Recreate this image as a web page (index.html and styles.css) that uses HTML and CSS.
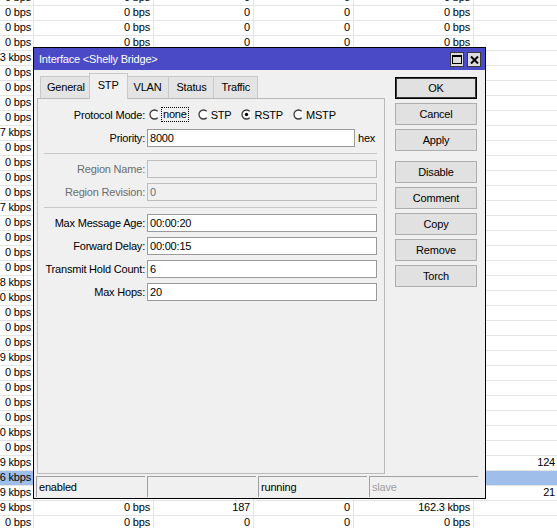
FILE: index.html
```html
<!DOCTYPE html>
<html>
<head>
<meta charset="utf-8">
<title>Interface &lt;Shelly Bridge&gt;</title>
<link rel="stylesheet" href="styles.css">
</head>
<body>
<div class="grid">
  <div class="row"><span class="c">0 bps</span><span class="c">0 bps</span><span class="c">0</span><span class="c">0</span><span class="c">0 bps</span><span class="c"></span></div>
  <div class="row"><span class="c">0 bps</span><span class="c">0 bps</span><span class="c">0</span><span class="c">0</span><span class="c">0 bps</span><span class="c"></span></div>
  <div class="row"><span class="c">0 bps</span><span class="c">0 bps</span><span class="c">0</span><span class="c">0</span><span class="c">0 bps</span><span class="c"></span></div>
  <div class="row"><span class="c">0 bps</span><span class="c">0 bps</span><span class="c">0</span><span class="c">0</span><span class="c">0 bps</span><span class="c"></span></div>
  <div class="row"><span class="c">3 kbps</span><span class="c"></span><span class="c"></span><span class="c"></span><span class="c"></span><span class="c"></span></div>
  <div class="row"><span class="c">0 bps</span><span class="c"></span><span class="c"></span><span class="c"></span><span class="c"></span><span class="c"></span></div>
  <div class="row"><span class="c">0 bps</span><span class="c"></span><span class="c"></span><span class="c"></span><span class="c"></span><span class="c"></span></div>
  <div class="row"><span class="c">0 bps</span><span class="c"></span><span class="c"></span><span class="c"></span><span class="c"></span><span class="c"></span></div>
  <div class="row"><span class="c">0 bps</span><span class="c"></span><span class="c"></span><span class="c"></span><span class="c"></span><span class="c"></span></div>
  <div class="row"><span class="c">7 kbps</span><span class="c"></span><span class="c"></span><span class="c"></span><span class="c"></span><span class="c"></span></div>
  <div class="row"><span class="c">0 bps</span><span class="c"></span><span class="c"></span><span class="c"></span><span class="c"></span><span class="c"></span></div>
  <div class="row"><span class="c">0 bps</span><span class="c"></span><span class="c"></span><span class="c"></span><span class="c"></span><span class="c"></span></div>
  <div class="row"><span class="c">0 bps</span><span class="c"></span><span class="c"></span><span class="c"></span><span class="c"></span><span class="c"></span></div>
  <div class="row"><span class="c">0 bps</span><span class="c"></span><span class="c"></span><span class="c"></span><span class="c"></span><span class="c"></span></div>
  <div class="row"><span class="c">7 kbps</span><span class="c"></span><span class="c"></span><span class="c"></span><span class="c"></span><span class="c"></span></div>
  <div class="row"><span class="c">0 bps</span><span class="c"></span><span class="c"></span><span class="c"></span><span class="c"></span><span class="c"></span></div>
  <div class="row"><span class="c">0 bps</span><span class="c"></span><span class="c"></span><span class="c"></span><span class="c"></span><span class="c"></span></div>
  <div class="row"><span class="c">0 bps</span><span class="c"></span><span class="c"></span><span class="c"></span><span class="c"></span><span class="c"></span></div>
  <div class="row"><span class="c">0 bps</span><span class="c"></span><span class="c"></span><span class="c"></span><span class="c"></span><span class="c"></span></div>
  <div class="row"><span class="c">8 kbps</span><span class="c"></span><span class="c"></span><span class="c"></span><span class="c"></span><span class="c"></span></div>
  <div class="row"><span class="c">0 kbps</span><span class="c"></span><span class="c"></span><span class="c"></span><span class="c"></span><span class="c"></span></div>
  <div class="row"><span class="c">0 bps</span><span class="c"></span><span class="c"></span><span class="c"></span><span class="c"></span><span class="c"></span></div>
  <div class="row"><span class="c">0 bps</span><span class="c"></span><span class="c"></span><span class="c"></span><span class="c"></span><span class="c"></span></div>
  <div class="row"><span class="c">0 bps</span><span class="c"></span><span class="c"></span><span class="c"></span><span class="c"></span><span class="c"></span></div>
  <div class="row"><span class="c">9 kbps</span><span class="c"></span><span class="c"></span><span class="c"></span><span class="c"></span><span class="c"></span></div>
  <div class="row"><span class="c">0 bps</span><span class="c"></span><span class="c"></span><span class="c"></span><span class="c"></span><span class="c"></span></div>
  <div class="row"><span class="c">0 bps</span><span class="c"></span><span class="c"></span><span class="c"></span><span class="c"></span><span class="c"></span></div>
  <div class="row"><span class="c">0 bps</span><span class="c"></span><span class="c"></span><span class="c"></span><span class="c"></span><span class="c"></span></div>
  <div class="row"><span class="c">0 bps</span><span class="c"></span><span class="c"></span><span class="c"></span><span class="c"></span><span class="c"></span></div>
  <div class="row"><span class="c">0 kbps</span><span class="c"></span><span class="c"></span><span class="c"></span><span class="c"></span><span class="c"></span></div>
  <div class="row"><span class="c">0 bps</span><span class="c"></span><span class="c"></span><span class="c"></span><span class="c"></span><span class="c"></span></div>
  <div class="row"><span class="c">9 kbps</span><span class="c"></span><span class="c"></span><span class="c"></span><span class="c"></span><span class="c">124</span></div>
  <div class="row sel"><span class="c">6 kbps</span><span class="c"></span><span class="c"></span><span class="c"></span><span class="c"></span><span class="c"></span></div>
  <div class="row"><span class="c">9 kbps</span><span class="c"></span><span class="c"></span><span class="c"></span><span class="c"></span><span class="c">21</span></div>
  <div class="row"><span class="c">9 kbps</span><span class="c">0 bps</span><span class="c">187</span><span class="c">0</span><span class="c">162.3 kbps</span><span class="c"></span></div>
  <div class="row"><span class="c">0 bps</span><span class="c">0 bps</span><span class="c">0</span><span class="c">0</span><span class="c">0 bps</span><span class="c"></span></div>
</div>

<div class="dialog">
  <div class="titlebar">
    <span class="title">Interface &lt;Shelly Bridge&gt;</span>
    <span class="tbtns">
      <span class="tbtn"><svg width="10" height="9" viewBox="0 0 10 9"><rect x="0.5" y="0.5" width="9" height="8" fill="none" stroke="#000" stroke-width="1"/><rect x="0" y="0" width="10" height="2" fill="#000"/></svg></span>
      <span class="tbtn"><svg width="9" height="8" viewBox="0 0 9 8"><path d="M1 0.5 L8 7.5 M8 0.5 L1 7.5" stroke="#000" stroke-width="2" fill="none"/></svg></span>
    </span>
  </div>
  <div class="main">
    <div class="tabctl">
      <div class="tabs">
        <span class="tab">General</span>
        <span class="tab active">STP</span>
        <span class="tab">VLAN</span>
        <span class="tab">Status</span>
        <span class="tab">Traffic</span>
      </div>
      <div class="panel">
        <div class="frow">
          <span class="lbl">Protocol Mode:</span>
          <span class="radios">
            <span class="opt"><svg class="radio" width="13" height="13" viewBox="0 0 13 13"><circle cx="5.5" cy="6.5" r="4.5" fill="#fff"/><path d="M8.68 3.32 A4.5 4.5 0 1 0 8.68 9.68" fill="none" stroke="#3c3c3c" stroke-width="1.3"/></svg><span class="focus">none</span></span>
            <span class="opt"><svg class="radio" width="13" height="13" viewBox="0 0 13 13"><circle cx="5.5" cy="6.5" r="4.5" fill="#fff"/><path d="M8.68 3.32 A4.5 4.5 0 1 0 8.68 9.68" fill="none" stroke="#3c3c3c" stroke-width="1.3"/></svg><span>STP</span></span>
            <span class="opt"><svg class="radio" width="13" height="13" viewBox="0 0 13 13"><circle cx="5.5" cy="6.5" r="4.5" fill="#fff"/><path d="M8.68 3.32 A4.5 4.5 0 1 0 8.68 9.68" fill="none" stroke="#3c3c3c" stroke-width="1.3"/><circle cx="5.5" cy="6.5" r="1.7" fill="#000"/></svg><span>RSTP</span></span>
            <span class="opt"><svg class="radio" width="13" height="13" viewBox="0 0 13 13"><circle cx="5.5" cy="6.5" r="4.5" fill="#fff"/><path d="M8.68 3.32 A4.5 4.5 0 1 0 8.68 9.68" fill="none" stroke="#3c3c3c" stroke-width="1.3"/></svg><span>MSTP</span></span>
          </span>
        </div>
        <div class="frow">
          <span class="lbl">Priority:</span>
          <span class="inp">8000</span>
          <span class="unit">hex</span>
        </div>
        <div class="sep"></div>
        <div class="frow">
          <span class="lbl dis">Region Name:</span>
          <span class="inp dis"></span>
        </div>
        <div class="frow">
          <span class="lbl dis">Region Revision:</span>
          <span class="inp dis">0</span>
        </div>
        <div class="sep"></div>
        <div class="frow">
          <span class="lbl">Max Message Age:</span>
          <span class="inp">00:00:20</span>
        </div>
        <div class="frow">
          <span class="lbl">Forward Delay:</span>
          <span class="inp">00:00:15</span>
        </div>
        <div class="frow">
          <span class="lbl">Transmit Hold Count:</span>
          <span class="inp">6</span>
        </div>
        <div class="frow">
          <span class="lbl">Max Hops:</span>
          <span class="inp">20</span>
        </div>
      </div>
    </div>
    <div class="buttons">
      <span class="btn default">OK</span>
      <span class="btn">Cancel</span>
      <span class="btn">Apply</span>
      <span class="btn gap">Disable</span>
      <span class="btn">Comment</span>
      <span class="btn">Copy</span>
      <span class="btn">Remove</span>
      <span class="btn">Torch</span>
    </div>
  </div>
  <div class="status">
    <span class="field">enabled</span>
    <span class="field"></span>
    <span class="field">running</span>
    <span class="field dim">slave</span>
  </div>
</div>
</body>
</html>
```

FILE: styles.css
```css
* { box-sizing: border-box; }
html, body { margin: 0; padding: 0; }
body {
  width: 557px;
  height: 528px;
  overflow: hidden;
  position: relative;
  background: #fff;
  font-family: "Liberation Sans", Arial, sans-serif;
  font-size: 11px;
  letter-spacing: -0.2px;
  color: #000;
}

/* background list */
.grid { margin-top: -9px; }
.row {
  display: grid;
  grid-template-columns: 34px 120px 100px 100px 120px 84px;
  height: 15px;
  border-bottom: 1px solid #e4e4e4;
}
.row.sel { background: #9fbfea; }
.c {
  display: flex;
  justify-content: flex-end;
  align-items: center;
  overflow: hidden;
  white-space: nowrap;
  padding-right: 3px;
  padding-bottom: 1px;
  border-right: 1px solid #e4e4e4;
  line-height: 13px;
}
.c:first-child { padding-right: 2px; }
.c:last-child { padding-right: 2px; }

/* dialog window */
.dialog {
  position: absolute;
  left: 33px;
  top: 47px;
  width: 453px;
  height: 452px;
  border: 1px solid #000;
  background: #f0f0f0;
  display: flex;
  flex-direction: column;
}
.titlebar {
  height: 22px;
  flex: none;
  background: #4a4ac6;
  color: #fff;
  display: flex;
  align-items: center;
  padding: 0 4px 0 5px;
}
.title { flex: 1; }
.tbtns { display: flex; gap: 3px; margin-top: 1px; }
.tbtn {
  width: 14px;
  height: 15px;
  background: #dcdcdc;
  border: 1px solid #3a3a3a;
  display: flex;
  align-items: center;
  justify-content: center;
}

.main {
  height: 404px;
  flex: none;
  display: flex;
  gap: 10px;
  padding: 3px 0 0 3px;
}
.tabctl {
  width: 348px;
  display: flex;
  flex-direction: column;
}
.tabs {
  height: 25px;
  display: flex;
  align-items: flex-end;
  padding-left: 3px;
}
.tab {
  height: 22px;
  padding: 0 7px;
  border: 1px solid #c8c8c8;
  border-bottom: none;
  background: #e4e4e4;
  margin-right: -1px;
  line-height: 21px;
}
.tab:first-child { padding: 0 6px; }
.tab.active {
  height: 26px;
  margin: 0 -2px -1px -2px;
  padding: 0 8px;
  background: #f0f0f0;
  position: relative;
  z-index: 1;
  line-height: 22px;
}
.panel {
  flex: 1;
  border: 1px solid #b9b9b9;
  padding: 4px 7px 0 6px;
}

.frow {
  height: 23px;
  display: flex;
  align-items: center;
}
.lbl {
  width: 101px;
  flex: none;
  text-align: right;
  margin-right: 2px;
  white-space: nowrap;
}
.lbl.dis { color: #6d6d6d; }
.inp {
  flex: 1;
  height: 18px;
  background: #fff;
  border: 1px solid #9a9a9a;
  padding-left: 2px;
  line-height: 16px;
  white-space: nowrap;
}
.inp.dis {
  background: #f0f0f0;
  border-color: #bdbdbd;
  color: #6d6d6d;
}
.unit {
  width: 19px;
  flex: none;
  margin-left: 3px;
}
.sep {
  height: 1px;
  background: #c8c8c8;
  margin: 4px 0 3px;
}

.radios {
  display: flex;
  align-items: center;
  margin-left: 2px;
}
.opt {
  display: flex;
  align-items: center;
  margin-right: 10px;
}
.radio { display: block; flex: none; }
.focus {
  outline: 1px dotted #000;
  outline-offset: 0;
  padding: 0 1px;
  line-height: 13px;
}

.buttons {
  width: 82px;
  display: flex;
  flex-direction: column;
  gap: 4px;
  margin-top: 4px;
}
.btn {
  height: 22px;
  background: #e1e1e1;
  border: 1px solid #adadad;
  text-align: center;
  line-height: 20px;
}
.btn.default {
  border-color: #000;
  box-shadow: inset 0 0 0 1px #3a3a3a;
}
.btn.gap { margin-top: 6px; }

.status {
  flex: 1;
  display: flex;
  gap: 2px;
  padding: 2px 0 0 2px;
}
.field {
  width: 109px;
  height: 21px;
  border-top: 1px solid #a0a0a0;
  border-left: 1px solid #a0a0a0;
  padding-left: 2px;
  line-height: 20px;
}
.field.dim { color: #a0a0a0; }
```
